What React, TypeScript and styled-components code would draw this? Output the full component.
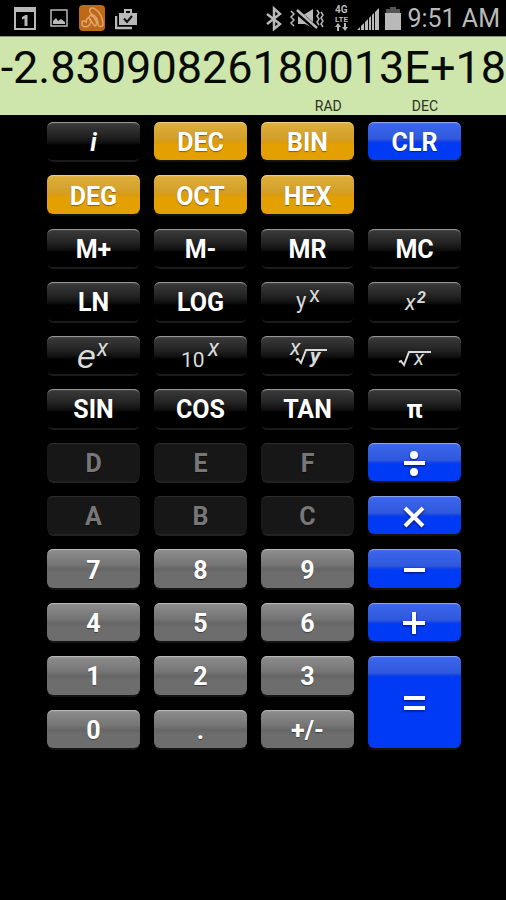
import React from "react";
import styled, { createGlobalStyle, css } from "styled-components";

type Tone = "black" | "amber" | "blue" | "gray" | "disabled";

const GlobalStyle = createGlobalStyle`
  * { box-sizing: border-box; }
  body { margin: 0; background: #000; font-family: Roboto, "Liberation Sans", sans-serif; }
`;

const Page = styled.div`
  display: flex;
  flex-direction: column;
  min-height: 100vh;
  background: #000;
`;

const StatusBar = styled.header`
  display: flex;
  justify-content: space-between;
  align-items: center;
  height: 36px;
  padding: 0 6px 0 14px;
  color: #b9b9b9;
`;

const StatusGroup = styled.div<{ $gap: number }>`
  display: flex;
  align-items: center;
  gap: ${(p) => p.$gap}px;
  svg { display: block; }
`;

const Clock = styled.time`
  font-size: 25px;
  line-height: 36px;
  padding-top: 2px;
  white-space: nowrap;
`;

const Display = styled.section`
  display: flex;
  flex-direction: column;
  border-top: 1px solid #8b9478;
  background: #cee6ab;
  color: #070b05;
  overflow: hidden;
`;

const Readout = styled.output`
  display: block;
  font-size: 45px;
  line-height: 60px;
  padding-top: 1px;
  text-align: right;
  white-space: nowrap;
`;

const Modes = styled.div`
  display: flex;
  justify-content: flex-end;
  gap: 70px;
  padding: 0 68px 1px 0;
  font-size: 14px;
  line-height: 16px;
  color: #2c3324;
`;

const Keypad = styled.main`
  flex: 1;
  display: grid;
  grid-template-columns: repeat(4, 1fr);
  grid-template-rows: repeat(12, minmax(38px, 1fr));
  gap: 15px 14px;
  margin: 7px 45px 152px 47px;
`;

const tones: Record<Tone, ReturnType<typeof css>> = {
  black: css`
    background: linear-gradient(#3c3c3c, #232323 14px, #0e0e0e 21px, #000 23px);
    box-shadow: inset 0 2px 1px -1px #a0a0a0, 0 3px 0 -1px #1b1b1b;
  `,
  amber: css`
    background: linear-gradient(#dfb03c, #d3a02a 16px, #d99c12 20px, #e3a000 23px);
    box-shadow: inset 0 2px 1px -1px #f0d080, 0 3px 0 -1px #14140f;
  `,
  blue: css`
    background: linear-gradient(#3c68ef, #2f58dc 17px, #0a3cea 20px, #003af5 22px);
    box-shadow: inset 0 2px 1px -1px #91a8f0, 0 3px 0 -1px #15150d;
  `,
  gray: css`
    background: linear-gradient(#8e8e8e, #747474 16px, #656565 20px, #6d6d6d 24px);
    box-shadow: inset 0 2px 1px -1px #bcbcbc, 0 3px 0 -1px #151515;
  `,
  disabled: css`
    background: #171717;
    box-shadow: inset 0 2px 1px -1px #303030, 0 3px 0 -1px #222;
  `,
};

const Key = styled.button<{ $tone: Tone; $tall?: boolean; $italic?: boolean }>`
  display: flex;
  align-items: center;
  justify-content: center;
  min-width: 0;
  border: 0;
  border-radius: 6px;
  padding: 4px 0 0;
  font-family: inherit;
  font-size: 25px;
  font-weight: 700;
  font-style: ${(p) => (p.$italic ? "italic" : "normal")};
  line-height: 30px;
  color: ${(p) => (p.$tone === "disabled" ? "#777" : "#fff")};
  text-shadow: 0 1px 1px rgba(0, 0, 0, 0.4);
  grid-row: ${(p) => (p.$tall ? "span 2" : "auto")};
  ${(p) => tones[p.$tone]}
  svg { display: block; flex: none; overflow: visible; }
`;

const Blank = styled.span``;

const Formula = styled.svg.attrs({ width: 94, height: 34, viewBox: "0 4 94 34", "aria-hidden": true })`
  font-family: Roboto, sans-serif;
  fill: #dadada;
  path { fill: none; stroke: #dadada; stroke-width: 2; }
`;

const Slanted = styled.text<{ $size: number; $bold?: boolean }>`
  font-style: italic;
  font-size: ${(p) => p.$size}px;
  font-weight: ${(p) => (p.$bold ? 700 : 400)};
`;

const BaseE = styled.text`
  font-family: "Liberation Sans", Arial, sans-serif;
  font-style: italic;
  font-size: 34px;
  font-weight: 400;
`;

const Upright = styled.text<{ $size: number }>`
  font-size: ${(p) => p.$size}px;
  font-weight: 400;
`;

const OperatorSvg = styled.svg.attrs({ width: 24, height: 26, viewBox: "-12 -13 24 26", "aria-hidden": true })`
  stroke: #fff;
  stroke-width: 4;
  fill: #fff;
  filter: drop-shadow(0 1px 1px rgba(0, 0, 40, 0.7));
`;

const operatorPaths: Record<string, string> = {
  minus: "M-11 -1H10",
  plus: "M-12 -1H10M-1 -12V10",
  times: "M-10 -9L8 9M8 -9L-10 9",
  divide: "M-11 -1H10",
  equals: "M-11 -6H10M-11 4H10",
};

function Operator({ kind }: { kind: string }) {
  return (
    <OperatorSvg>
      <path d={operatorPaths[kind]} />
      {kind === "divide" && (
        <g stroke="none">
          <circle cx="-1" cy="-9" r="4" />
          <circle cx="-1" cy="8" r="4" />
        </g>
      )}
    </OperatorSvg>
  );
}

const powerYX = (
  <Formula>
    <Upright x="35" y="26" $size={22}>y</Upright>
    <Upright x="48" y="20" $size={22}>x</Upright>
  </Formula>
);
const square = (
  <Formula>
    <Slanted x="37" y="28" $size={22}>x</Slanted>
    <Slanted x="49" y="21" $size={16} $bold>2</Slanted>
  </Formula>
);
const expE = (
  <Formula>
    <BaseE x="30" y="32">e</BaseE>
    <Slanted x="50" y="20" $size={23}>x</Slanted>
  </Formula>
);
const expTen = (
  <Formula>
    <Upright x="27" y="31" $size={21}>10</Upright>
    <Slanted x="54" y="20" $size={23}>x</Slanted>
  </Formula>
);
const rootXY = (
  <Formula>
    <Slanted x="29" y="19" $size={22}>x</Slanted>
    <path d="M35 24L37 23L40 27L45 14H66" />
    <Slanted x="49" y="27" $size={21} $bold>y</Slanted>
  </Formula>
);
const squareRoot = (
  <Formula>
    <path d="M31 26L33 25L36 29L41 16H63" />
    <Slanted x="46" y="29" $size={21}>x</Slanted>
  </Formula>
);

interface KeySpec {
  id: string;
  tone: Tone;
  face?: React.ReactNode;
  tall?: boolean;
  italic?: boolean;
}

const make = (tone: Tone, ...ids: string[]): KeySpec[] => ids.map((id) => ({ id, tone }));
const op = (id: string, kind: string, tall = false): KeySpec => ({
  id,
  tone: "blue",
  face: <Operator kind={kind} />,
  tall,
});

const keys: (KeySpec | null)[] = [
  { id: "i", tone: "black", italic: true },
  ...make("amber", "DEC", "BIN"),
  ...make("blue", "CLR"),
  ...make("amber", "DEG", "OCT", "HEX"),
  null,
  ...make("black", "M+", "M-", "MR", "MC", "LN", "LOG"),
  { id: "y to the power x", tone: "black", face: powerYX },
  { id: "x squared", tone: "black", face: square },
  { id: "e to the power x", tone: "black", face: expE },
  { id: "10 to the power x", tone: "black", face: expTen },
  { id: "x-th root of y", tone: "black", face: rootXY },
  { id: "square root of x", tone: "black", face: squareRoot },
  ...make("black", "SIN", "COS", "TAN", "π"),
  ...make("disabled", "D", "E", "F"),
  op("divide", "divide"),
  ...make("disabled", "A", "B", "C"),
  op("multiply", "times"),
  ...make("gray", "7", "8", "9"),
  op("subtract", "minus"),
  ...make("gray", "4", "5", "6"),
  op("add", "plus"),
  ...make("gray", "1", "2", "3"),
  op("equals", "equals", true),
  ...make("gray", "0", ".", "+/-"),
];

function NotificationIcons() {
  return (
    <StatusGroup $gap={10}>
      <svg width="22" height="24" viewBox="0 0 22 24">
        <path d="M1 2V23H21V2Z" fill="none" stroke="currentColor" strokeWidth="2" />
        <path d="M0 1H22V6H0Z" fill="currentColor" />
        <path d="M8 11L11.5 9H13.5V20H10.5V12.5L8 13.5Z" fill="currentColor" />
      </svg>
      <svg width="23" height="24" viewBox="0 0 23 24">
        <rect x="5" y="4" width="16" height="16" fill="none" stroke="currentColor" strokeWidth="1.5" />
        <path d="M7 18V15L10 12L12 15L15 13L19 16V18Z" fill="currentColor" />
      </svg>
      <svg width="26" height="26" viewBox="0 0 26 26">
        <rect width="26" height="26" rx="4" fill="#bd6917" />
        <g fill="none" stroke="#e5a56b" strokeWidth="1.5">
          <path d="M11 7C10 3 13 2 16 4C22 8 24 14 24 20C23 22 20 22 19 20C19 14 16 10 12 9Z" />
          <path d="M10 12C11 9 14 11 16 14C18 17 18 20 16 21C14 20 14 17 11 15Z" />
          <path d="M3 18C3 15 6 16 7 17C7 13 10 12 11 14C13 16 12 18 11 19C9 23 4 22 3 20Z" />
        </g>
      </svg>
      <svg width="22" height="24" viewBox="0 0 22 24">
        <path d="M1 10V22H17" fill="none" stroke="currentColor" strokeWidth="2.5" />
        <path d="M4 7H22V19H4Z" fill="currentColor" />
        <path d="M10 7V4H16V7" fill="none" stroke="currentColor" strokeWidth="2" />
        <path d="M9 12.5L12 16L17 10" fill="none" stroke="#111" strokeWidth="2" />
      </svg>
    </StatusGroup>
  );
}

function SystemIcons() {
  return (
    <StatusGroup $gap={6}>
      <svg width="18" height="26" viewBox="0 0 18 26">
        <path d="M2 9L15 19L9 24V3.5L15 9L2 19" fill="none" stroke="currentColor" strokeWidth="2.5" />
      </svg>
      <svg width="38" height="26" viewBox="0 0 38 26">
        <path d="M9 9H16L24 4V23L16 19H9Z" fill="currentColor" />
        <path d="M6 5L28 24" stroke="#000" strokeWidth="5" />
        <path d="M8 5L28 23" stroke="currentColor" strokeWidth="2.5" />
        <path
          d="M2 6L5 9L2 12L5 15L2 18L5 21M28 5L30 8L28 11L30 14L28 17L30 20M32 7L34 10L32 13L34 16L32 19L34 22"
          fill="none"
          stroke="currentColor"
          strokeWidth="1.5"
        />
      </svg>
      <svg width="18" height="26" viewBox="0 0 18 26" fill="currentColor" fontFamily="Roboto, sans-serif" fontWeight="700">
        <text x="2" y="8" fontSize="10">4G</text>
        <text x="2" y="17" fontSize="8">LTE</text>
        <path d="M5 18L8 22H6V26H4V22H2ZM12 26L9 22H11V18H13V22H15Z" />
      </svg>
      <svg width="22" height="24" viewBox="0 0 22 24" fill="currentColor">
        <path d="M0 24L3 21V24ZM4 20L7 17V24H4ZM8 16L11 13V24H8ZM12 12L14 10V24H12ZM15 9L17 7V24H15ZM18 6L22 2V24H18Z" />
      </svg>
      <svg width="16" height="26" viewBox="0 0 16 26">
        <path d="M5 2H11V4H15V8H1V4H5Z" fill="#555" />
        <path d="M0 8H16V25H0Z" fill="currentColor" />
      </svg>
      <Clock>9:51 AM</Clock>
    </StatusGroup>
  );
}

export default function App() {
  return (
    <>
      <GlobalStyle />
      <Page>
        <StatusBar>
          <NotificationIcons />
          <SystemIcons />
        </StatusBar>
        <Display>
          <Readout>-2.83090826180013E+18</Readout>
          <Modes>
            <span>RAD</span>
            <span>DEC</span>
          </Modes>
        </Display>
        <Keypad>
          {keys.map((k, i) =>
            k === null ? (
              <Blank key={i} />
            ) : (
              <Key
                key={k.id}
                type="button"
                $tone={k.tone}
                $tall={k.tall}
                $italic={k.italic}
                disabled={k.tone === "disabled"}
                aria-label={k.face ? k.id : undefined}
              >
                {k.face ?? k.id}
              </Key>
            )
          )}
        </Keypad>
      </Page>
    </>
  );
}
